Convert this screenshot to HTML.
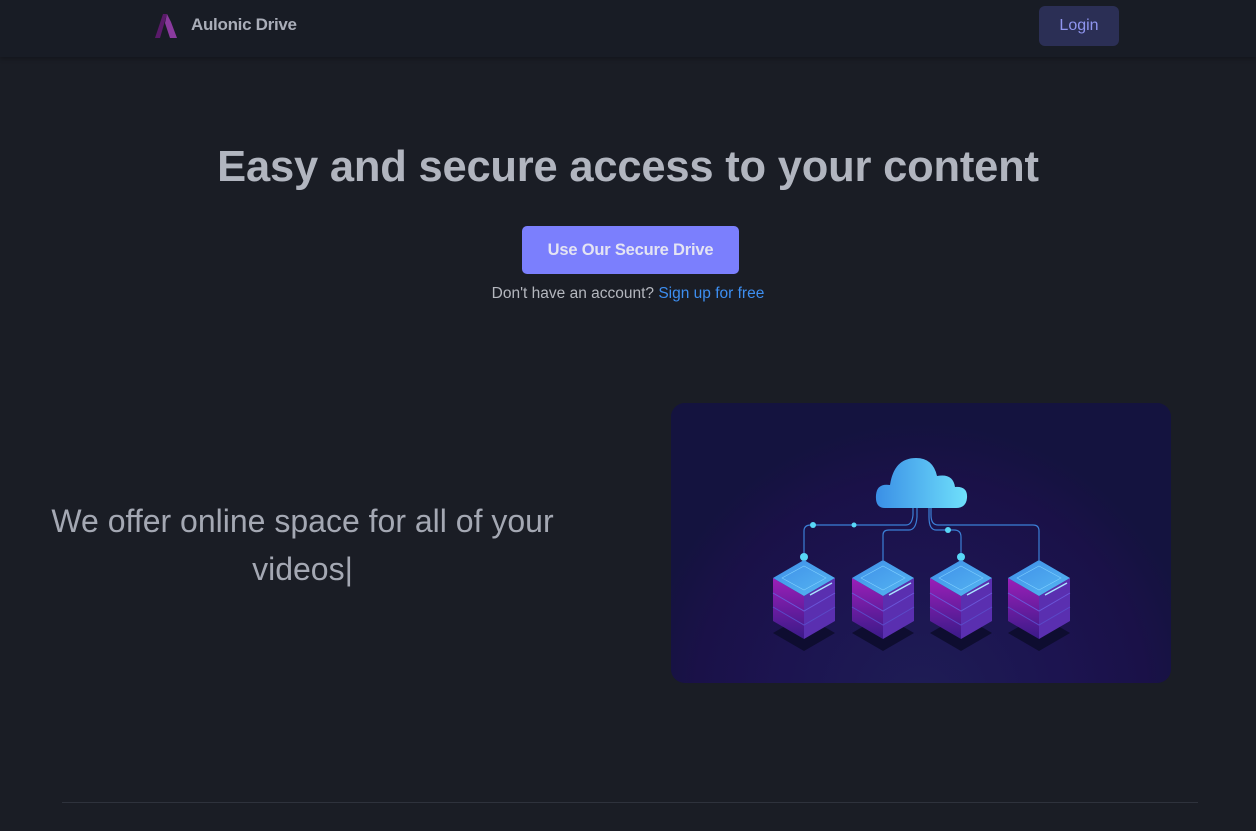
<!DOCTYPE html>
<html><head><meta charset="utf-8"><style>
body{margin:0;width:1256px;height:831px;background:#1a1d25;font-family:"Liberation Sans",sans-serif;overflow:hidden;position:relative}
.hdr{position:absolute;left:0;top:0;width:1256px;height:57px;background:#181c25;box-shadow:0 2px 4px rgba(0,0,0,.25)}
.brand{position:absolute;left:191px;top:15px;color:#a9adb8;font-weight:bold;font-size:17px;letter-spacing:-.3px}
.login{position:absolute;left:1039px;top:6px;width:80px;height:40px;border-radius:6px;background:#2b2f55;color:#8f95ef;font-size:16px;text-align:center;line-height:40px}
h1{position:absolute;left:0;width:1256px;top:143px;margin:0;text-align:center;color:#b1b5bf;font-size:43.5px;font-weight:900;letter-spacing:-0.2px}
.btn{position:absolute;left:522px;top:226px;width:217px;height:48px;border-radius:5px;background:#7b7ffd;color:#e4e4f3;font-weight:bold;font-size:16.5px;letter-spacing:-.2px;text-align:center;line-height:48px}
.sub{position:absolute;left:0;width:1256px;top:285px;text-align:center;color:#b4b7be;font-size:15.5px}
.sub a{color:#3d8ef0;text-decoration:none}
.txt{position:absolute;left:20px;width:565px;top:497px;text-align:center;color:#a4a8b3;font-size:32px;line-height:48px}
.img{position:absolute;left:671px;top:403px;width:500px;height:280px;border-radius:14px;overflow:hidden;background:#14133f}
.hr{position:absolute;left:62px;top:802px;width:1136px;height:1px;background:#2e323c}
</style></head><body>
<div class="hdr">
<svg style="position:absolute;left:155px;top:13px" width="26" height="26" viewBox="0 0 26 26"><polygon points="8,1 12,1 5,25 0,25" fill="#5a1a6a"/><polygon points="12,1 16,9 22,25 15,25 10,10" fill="#8a3a9e"/></svg>
<div class="brand">Aulonic Drive</div>
<div class="login">Login</div>
</div>
<h1>Easy and secure access to your content</h1>
<div class="btn">Use Our Secure Drive</div>
<div class="sub">Don't have an account? <a>Sign up for free</a></div>
<div class="txt">We offer online space for all of your videos|</div>
<div class="img">
<svg width="500" height="280" viewBox="0 0 500 280">
<defs>
<radialGradient id="g" cx="250" cy="300" r="280" gradientUnits="userSpaceOnUse"><stop offset="0" stop-color="#1e1d55"/><stop offset=".5" stop-color="#1c1450"/><stop offset=".8" stop-color="#1a1148"/><stop offset="1" stop-color="#14133f"/></radialGradient>
<linearGradient id="c" x1="0" x2="1"><stop offset="0" stop-color="#3a8fe6"/><stop offset="1" stop-color="#6fe0fb"/></linearGradient>
<linearGradient id="t" x1="0" y1="0" x2="1" y2="1"><stop offset="0" stop-color="#3e8ee8"/><stop offset="1" stop-color="#56b7f2"/></linearGradient>
<linearGradient id="s" x1="0" y1="0" x2="0" y2="1"><stop offset="0" stop-color="#9b1fb8"/><stop offset="1" stop-color="#3a1a88"/></linearGradient>
<g id="srv">
<polygon points="0,212 31,230 0,248 -31,230" fill="#0e0d30"/>
<polygon points="-31,175 0,193 0,236 -31,218" fill="url(#s)"/>
<polygon points="31,175 0,193 0,236 31,218" fill="#5a2fb0"/>
<polyline points="-31,190 0,208 31,190" fill="none" stroke="#6a56d8" stroke-width="1"/>
<polyline points="-31,204 0,222 31,204" fill="none" stroke="#5a4ac8" stroke-width="1"/>
<polygon points="0,157 31,175 0,193 -31,175" fill="url(#t)"/>
<polygon points="0,163 22,175 0,187 -22,175" fill="none" stroke="#7fd0ff" stroke-width=".6"/>
<line x1="6" y1="192" x2="28" y2="180" stroke="#a8e4ff" stroke-width="1.5"/>
</g>
</defs>
<rect width="500" height="280" fill="url(#g)"/>
<g fill="none" stroke="#3b7fd6" stroke-width="1.2">
<path d="M133,152 V128 Q133,122 140,122 H235 Q241,122 242,112 V104"/>
<path d="M212,157 V132 Q212,127 218,127 H238 Q245,127 246,114 V104"/>
<path d="M290,152 V134 Q290,127 283,127 H265 Q258,127 258,114 V104"/>
<path d="M368,157 V128 Q368,122 362,122 H267 Q260,122 260,112 V104"/>
</g>
<g fill="#58d8f7"><circle cx="142" cy="122" r="3"/><circle cx="183" cy="122" r="2.5"/><circle cx="277" cy="127" r="3"/><circle cx="133" cy="154" r="4"/><circle cx="290" cy="154" r="4"/></g>
<g><use href="#srv" x="133"/><use href="#srv" x="212"/><use href="#srv" x="290"/><use href="#srv" x="368"/></g>
<path d="M214,105 Q204,105 205,92 Q206,80 219,82 Q223,55 245,55 Q262,55 266,73 Q282,70 284,84 Q297,83 296,95 Q295,105 285,105 Z" fill="url(#c)"/>
</svg>
</div>
<div class="hr"></div>
</body></html>
